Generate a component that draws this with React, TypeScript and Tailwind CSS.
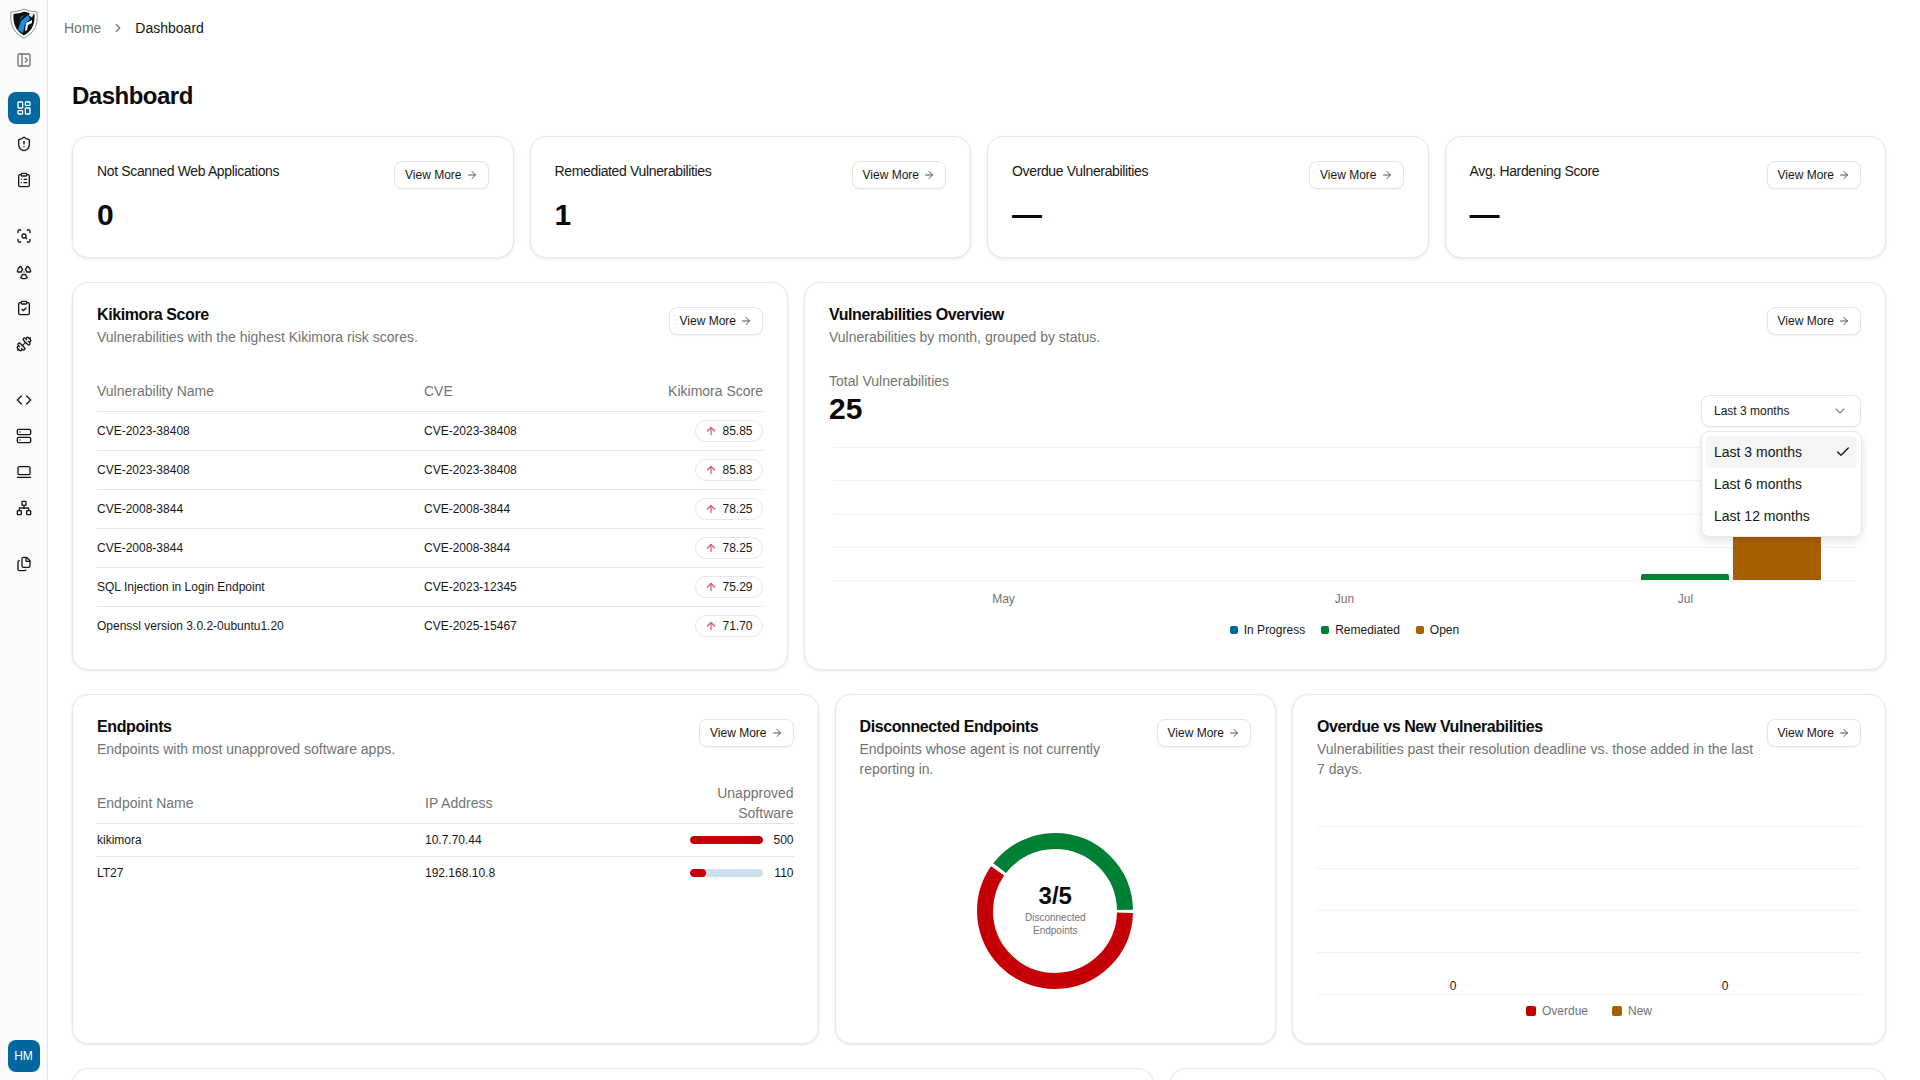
import { ReactNode } from "react";
import {
  ArrowRight,
  ArrowUp,
  Check,
  ChevronDown,
  ChevronRight,
  ClipboardCheck,
  ClipboardList,
  Code,
  Dumbbell,
  Files,
  LaptopMinimal,
  LayoutDashboard,
  Network,
  PanelLeftOpen,
  Radiation,
  ScanSearch,
  Server,
  ShieldAlert,
} from "lucide-react";

const kikimoraRows = [
  ["CVE-2023-38408", "CVE-2023-38408", "85.85"],
  ["CVE-2023-38408", "CVE-2023-38408", "85.83"],
  ["CVE-2008-3844", "CVE-2008-3844", "78.25"],
  ["CVE-2008-3844", "CVE-2008-3844", "78.25"],
  ["SQL Injection in Login Endpoint", "CVE-2023-12345", "75.29"],
  ["Openssl version 3.0.2-0ubuntu1.20", "CVE-2025-15467", "71.70"],
];

const topCards = [
  { title: "Not Scanned Web Applications", value: "0" },
  { title: "Remediated Vulnerabilities", value: "1" },
  { title: "Overdue Vulnerabilities", value: "—" },
  { title: "Avg. Hardening Score", value: "—" },
];

function Logo() {
  return (
    <svg viewBox="0 0 28 31" className="h-[31px] w-[28px]">
      <path d="M14 1l5 2 8 1c1 10-.5 20-13 26C1.500 24 0 14 1 4c5-.5 9-1 13-3z" fill="#fff" stroke="#6b7280" strokeWidth="0.8" />
      <path d="M14 3.500c-3 1.500-6.500 2-10.500 2.500-.5 8 1 16 10.500 21.500 9.500-5.500 11-13.500 10.500-21.500l-3.500-.5z" fill="#0b0f14" />
      <path d="M18 7l-7 6-3 9 5 3 2-9 5-5z" fill="#1d8fd8" />
      <path d="M11 8l4-1-6 6-1 4z" fill="#0f5c94" />
      <path d="M20 3l4 2.500-2 4-3-2z" fill="#e5e7eb" />
      <path d="M22 12l-6 3-1 8 2-1 1-5 4-2z" fill="#f3f4f6" />
    </svg>
  );
}

function ViewMore() {
  return (
    <button className="flex h-[28px] shrink-0 items-center gap-1 rounded-lg border border-[#e5e5e5] bg-white px-[10px] text-xs font-normal text-[#171717] shadow-[0_1px_2px_rgba(0,0,0,0.05)]">
      View More
      <ArrowRight className="size-3 text-[#525252]" />
    </button>
  );
}

function Card({ className, children }: { className: string; children?: ReactNode }) {
  return (
    <div className={`rounded-2xl border border-[#e8e8e8] bg-white shadow-[0_1px_3px_rgba(0,0,0,0.1)] ${className}`}>
      {children}
    </div>
  );
}

function CardHead({ title, desc }: { title: string; desc: string }) {
  return (
    <div className="flex items-start justify-between gap-3">
      <div className="-mt-1">
        <h3 className="text-base leading-6 font-bold tracking-[-0.4px] text-[#0a0a0a]">{title}</h3>
        <p className="text-sm leading-5 text-[#737373]">{desc}</p>
      </div>
      <ViewMore />
    </div>
  );
}

function SideIcon({ children, className = "" }: { children: ReactNode; className?: string }) {
  return (
    <div className={`flex size-8 items-center justify-center text-[#171717] ${className}`}>{children}</div>
  );
}

function LegendDot({ color, label, size = "size-2" }: { color: string; label: string; size?: string }) {
  return (
    <span className="flex items-center gap-[6px]">
      <span className={`rounded-[2px] ${size} ${color}`} />
      {label}
    </span>
  );
}

function Sidebar() {
  const cls = "size-4";
  return (
    <aside className="flex w-[48px] shrink-0 flex-col items-center border-r border-[#e5e5e5] bg-[#fafafa] pt-2 pb-2">
      <Logo />
      <PanelLeftOpen className="mt-[13px] size-4 text-[#737373]" />
      <div className="mt-[24px] flex flex-col gap-[4px]">
        <SideIcon className="rounded-lg bg-[#00689f] text-white">
          <LayoutDashboard className={cls} />
        </SideIcon>
        <SideIcon>
          <ShieldAlert className={cls} />
        </SideIcon>
        <SideIcon>
          <ClipboardList className={cls} />
        </SideIcon>
      </div>
      <div className="mt-[24px] flex flex-col gap-[4px]">
        <SideIcon>
          <ScanSearch className={cls} />
        </SideIcon>
        <SideIcon>
          <Radiation className={cls} />
        </SideIcon>
        <SideIcon>
          <ClipboardCheck className={cls} />
        </SideIcon>
        <SideIcon>
          <Dumbbell className={cls} />
        </SideIcon>
      </div>
      <div className="mt-[24px] flex flex-col gap-[4px]">
        <SideIcon>
          <Code className={cls} />
        </SideIcon>
        <SideIcon>
          <Server className={cls} />
        </SideIcon>
        <SideIcon>
          <LaptopMinimal className={cls} />
        </SideIcon>
        <SideIcon>
          <Network className={cls} />
        </SideIcon>
      </div>
      <div className="mt-[24px]">
        <SideIcon>
          <Files className={cls} />
        </SideIcon>
      </div>
      <div className="mt-auto flex size-8 items-center justify-center rounded-lg bg-[#00689f] text-xs text-white">HM</div>
    </aside>
  );
}

function KikimoraCard() {
  return (
    <Card className="col-span-2 h-[388px] p-6">
      <CardHead title="Kikimora Score" desc="Vulnerabilities with the highest Kikimora risk scores." />
      <table className="mt-[24px] w-full text-xs text-[#171717]">
        <thead>
          <tr className="h-[40px] border-b border-[#e5e5e5] text-left text-sm text-[#737373]">
            <th className="w-[327px] font-normal">Vulnerability Name</th>
            <th className="font-normal">CVE</th>
            <th className="text-right font-normal">Kikimora Score</th>
          </tr>
        </thead>
        <tbody>
          {kikimoraRows.map((row, i) => (
            <tr key={i} className="h-[39px] border-b border-[#e5e5e5] last:border-b-0">
              <td>{row[0]}</td>
              <td>{row[1]}</td>
              <td>
                <span className="ml-auto flex h-[22px] w-[68px] items-center justify-center gap-[5px] rounded-full border border-[#e8e8e8]">
                  <ArrowUp className="size-3 text-[#dc5a68]" strokeWidth={2.5} />
                  {row[2]}
                </span>
              </td>
            </tr>
          ))}
        </tbody>
      </table>
    </Card>
  );
}

function OverviewCard() {
  return (
    <Card className="relative col-span-3 h-[388px] p-6">
      <CardHead title="Vulnerabilities Overview" desc="Vulnerabilities by month, grouped by status." />
      <div className="mt-[24px] flex items-end justify-between">
        <div>
          <p className="text-sm leading-5 text-[#737373]">Total Vulnerabilities</p>
          <p className="text-[30px] leading-9 font-bold text-[#0a0a0a]">25</p>
        </div>
        <div className="flex h-[32px] w-[160px] items-center justify-between rounded-lg border border-[#e5e5e5] bg-white px-[12px] text-xs text-[#171717] shadow-[0_1px_2px_rgba(0,0,0,0.05)]">
          Last 3 months
          <ChevronDown className="size-4 text-[#8a8a8a]" />
        </div>
      </div>
      {/* chart */}
      <div className="mr-[5px] ml-[4px]">
        <div className="mt-[20px] flex h-[134px] flex-col justify-between">
          <div className="h-[1px] bg-[#f2f2f2]" />
          <div className="h-[1px] bg-[#f2f2f2]" />
          <div className="h-[1px] bg-[#f2f2f2]" />
          <div className="h-[1px] bg-[#f2f2f2]" />
          <div className="relative h-[1px] bg-[#f2f2f2]">
            <div className="absolute right-[35px] bottom-[1px] flex items-end gap-[4px]">
              <div className="h-[6px] w-[88px] rounded-t-[2px] bg-[#008035]" />
              <div className="h-[60px] w-[88px] bg-[#a66000]" />
            </div>
          </div>
        </div>
        <div className="mt-[10px] grid grid-cols-3 text-center text-xs text-[#737373]">
          <span>May</span>
          <span>Jun</span>
          <span>Jul</span>
        </div>
        <div className="mt-[15px] flex justify-center gap-4 text-xs text-[#171717]">
          <LegendDot color="bg-[#00689f]" label="In Progress" />
          <LegendDot color="bg-[#008035]" label="Remediated" />
          <LegendDot color="bg-[#a66000]" label="Open" />
        </div>
      </div>
      {/* open select menu */}
      <div className="absolute top-[148px] right-[23px] w-[161px] rounded-lg border border-[#e8e8e8] bg-white p-[4px] text-sm text-[#171717] shadow-[0_4px_8px_rgba(0,0,0,0.1)]">
        <div className="flex h-[32px] items-center justify-between rounded-md bg-[#f5f5f5] pr-[6px] pl-[8px]">
          Last 3 months
          <Check className="size-4" />
        </div>
        <div className="flex h-[32px] items-center pl-[8px]">Last 6 months</div>
        <div className="flex h-[32px] items-center pl-[8px]">Last 12 months</div>
      </div>
    </Card>
  );
}

function UsageBar({ pct, value }: { pct: number; value: string }) {
  return (
    <div className="ml-[-60px] flex items-center justify-end gap-[10px]">
      <div className="h-[8px] w-[73px] overflow-hidden rounded-full bg-[#cce0eb]">
        <div className="h-full rounded-full bg-[#c40006]" style={{ width: `${pct}%` }} />
      </div>
      <span className="w-[21px] text-right">{value}</span>
    </div>
  );
}

function EndpointsCard() {
  return (
    <Card className="col-span-5 h-[350px] p-6">
      <CardHead title="Endpoints" desc="Endpoints with most unapproved software apps." />
      <table className="mt-[24px] w-full text-xs text-[#171717]">
        <thead>
          <tr className="h-[40px] border-b border-[#e5e5e5] text-left text-sm text-[#737373]">
            <th className="w-[328px] font-normal">Endpoint Name</th>
            <th className="font-normal">IP Address</th>
            <th className="w-[90px] text-right leading-[20px] font-normal">Unapproved Software</th>
          </tr>
        </thead>
        <tbody>
          <tr className="h-[33px] border-b border-[#e5e5e5]">
            <td>kikimora</td>
            <td>10.7.70.44</td>
            <td>
              <UsageBar pct={100} value="500" />
            </td>
          </tr>
          <tr className="h-[33px]">
            <td>LT27</td>
            <td>192.168.10.8</td>
            <td>
              <UsageBar pct={22} value="110" />
            </td>
          </tr>
        </tbody>
      </table>
    </Card>
  );
}

function DisconnectedCard() {
  return (
    <Card className="col-span-3 h-[350px] p-6">
      <CardHead title="Disconnected Endpoints" desc="Endpoints whose agent is not currently reporting in." />
      <div className="mt-[54px] flex justify-center">
        <div className="relative size-[156px]">
          <svg viewBox="0 0 156 156" className="size-[156px]">
            <circle cx="78" cy="78" r="70" fill="none" stroke="#c40006" strokeWidth="16" strokeDasharray="260.4 179.4" strokeDashoffset="-1.750" />
            <circle cx="78" cy="78" r="70" fill="none" stroke="#008035" strokeWidth="16" strokeDasharray="172.4 267.4" strokeDashoffset="-265.65" />
          </svg>
          <div className="absolute inset-0 flex flex-col items-center justify-center text-center">
            <span className="-mt-[2px] -translate-y-px text-2xl leading-7 font-bold text-[#0a0a0a]">3/5</span>
            <span className="w-[80px] text-[10px] leading-[13px] text-[#737373]">Disconnected Endpoints</span>
          </div>
        </div>
      </div>
    </Card>
  );
}

function OverdueCard() {
  return (
    <Card className="col-span-4 h-[350px] p-6">
      <CardHead
        title="Overdue vs New Vulnerabilities"
        desc="Vulnerabilities past their resolution deadline vs. those added in the last 7 days."
      />
      <div className="mt-[47px] flex h-[169px] flex-col justify-between">
        <div className="h-[1px] bg-[#f2f2f2]" />
        <div className="h-[1px] bg-[#f2f2f2]" />
        <div className="h-[1px] bg-[#f2f2f2]" />
        <div className="h-[1px] bg-[#f2f2f2]" />
        <div className="h-[1px] bg-[#f2f2f2]" />
      </div>
      <div className="-mt-[17px] grid grid-cols-2 text-center text-xs text-[#171717]">
        <span>0</span>
        <span>0</span>
      </div>
      <div className="mt-[9px] flex justify-center gap-6 text-xs text-[#737373]">
        <LegendDot color="bg-[#c40006]" label="Overdue" size="size-[10px]" />
        <LegendDot color="bg-[#a66000]" label="New" size="size-[10px]" />
      </div>
    </Card>
  );
}

export default function App() {
  return (
    <div className="flex h-screen overflow-hidden bg-white font-['Liberation_Sans',sans-serif]">
      <Sidebar />
      <main className="min-w-0 flex-1">
        <div className="flex h-[56px] items-center gap-[10px] pl-[16px] text-sm">
          <span className="text-[#737373]">Home</span>
          <ChevronRight className="size-[14px] text-[#737373]" />
          <span className="text-[#171717]">Dashboard</span>
        </div>
        <div className="pr-[34px] pl-6">
          <h1 className="mt-[24px] text-2xl leading-8 font-bold tracking-[-0.5px] text-[#0a0a0a]">Dashboard</h1>
          <div className="mt-[24px] grid grid-cols-4 gap-4">
            {topCards.map((c) => (
              <Card key={c.title} className="h-[122px] p-6">
                <div className="flex items-start justify-between gap-3">
                  <div>
                    <p className="text-sm leading-5 tracking-tight text-[#171717]">{c.title}</p>
                    <p className="mt-[16px] text-[30px] leading-9 font-bold text-[#0a0a0a]">{c.value}</p>
                  </div>
                  <ViewMore />
                </div>
              </Card>
            ))}
          </div>
          <div className="mt-[24px] grid grid-cols-5 gap-4">
            <KikimoraCard />
            <OverviewCard />
          </div>
          <div className="mt-[24px] grid grid-cols-12 gap-4">
            <EndpointsCard />
            <DisconnectedCard />
            <OverdueCard />
          </div>
          <div className="mt-[24px] grid grid-cols-5 gap-4">
            <Card className="col-span-3 h-[200px]" />
            <Card className="col-span-2 h-[200px]" />
          </div>
        </div>
      </main>
    </div>
  );
}
